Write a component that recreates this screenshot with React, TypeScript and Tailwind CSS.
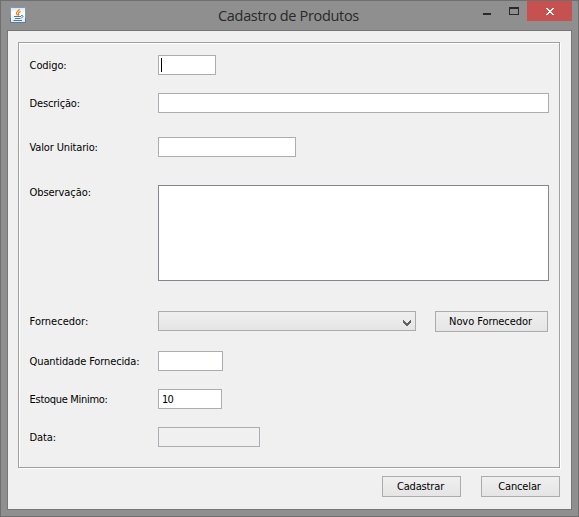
import type { ReactNode } from "react";

function Row({ label, spacing, gap, children }: { label: string; spacing: string; gap: string; children: ReactNode }) {
  return (
    <div className={`flex items-start ${gap}`}>
      <label className={`w-[129px] shrink-0 whitespace-nowrap pt-px pl-[0.6px] leading-[20px] ${spacing}`}>{label}</label>
      {children}
    </div>
  );
}

function Field({ size, children }: { size: string; children?: ReactNode }) {
  return <div className={`flex h-5 shrink-0 items-center border border-[#abadb3] bg-white px-[2px] ${size}`}>{children}</div>;
}

function Button({ size, children }: { size: string; children: ReactNode }) {
  return (
    <button
      className={`flex h-[21px] shrink-0 items-center justify-center whitespace-nowrap border border-[#acacac] bg-linear-to-b from-[#efefef] to-[#e5e5e5] pr-[2px] leading-none ${size}`}
    >
      {children}
    </button>
  );
}

function JavaIcon() {
  return (
    <svg width="16" height="16" viewBox="0 0 16 16" fill="none">
      <defs>
        <linearGradient id="tile" x1="0" y1="0" x2="0" y2="1">
          <stop offset="0" stopColor="#d9e3ea" />
          <stop offset="0.35" stopColor="#ffffff" />
          <stop offset="1" stopColor="#dfe7ec" />
        </linearGradient>
      </defs>
      <rect x="0.5" y="0.5" width="15" height="15" rx="0.8" fill="url(#tile)" stroke="#7d9bb0" />
      <path d="M0.5 11v4.5h15V11" stroke="#547e9c" />
      <path d="M9.3 2C9.5 4 6 4.6 6.4 6.3c.2.8.9 1.1 1.1 2M10.6 4.7C9 5.2 8 6 8.6 6.9c.5.7.2 1.1-.4 1.6" stroke="#ea8424" strokeWidth="1.3" />
      <path d="M4 9.5h7M5 11.5h5.5M3.5 13.5h8.5" stroke="#527b9b" strokeWidth="1.1" />
      <path d="M11 8.6c2.4-.8 3 1.5.2 2.4" stroke="#527b9b" />
    </svg>
  );
}

export default function App() {
  return (
    <div className="flex h-[517px] w-[579px] flex-col border border-[#6f6f6f] bg-[#8f8f8f] px-[6px] pb-[6px] font-['DejaVu_Sans_Condensed','DejaVu_Sans',sans-serif] text-[11px] text-black">
      <header className="grid h-[29px] shrink-0 grid-cols-[143px_1fr_143px] items-start">
        <div className="pt-[6px] pl-[3px]"><JavaIcon /></div>
        <h1 className="pt-[5px] pr-[2px] text-center font-['Open_Sans',sans-serif] text-[14.5px] leading-[20px] tracking-[-0.32px] whitespace-nowrap text-[#292929]">
          Cadastro de Produtos
        </h1>
        <div className="flex justify-end">
          <div className="mt-[12px] mr-[18px] h-[2px] w-2 bg-[#292929]" />
          <div className="mt-[6px] mr-2 h-2 w-[10px] border border-t-2 border-[#292929]" />
          <div className="flex h-5 w-[45px] shrink-0 items-center justify-center bg-[#c75050] pt-px pl-px">
            <svg width="8" height="7" viewBox="0 0 8 7" fill="#fff" shapeRendering="crispEdges">
              <path d="M0 0h2v1h1v1h2V1h1V0h2v1H7v1H6v1H5v1h1v1h1v1h1v1H6V6H5V5H3v1H2v1H0V6h1V5h1V4h1V3H2V2H1V1H0z" />
            </svg>
          </div>
        </div>
      </header>
      <main className="flex h-[480px] w-[565px] shrink-0 flex-col border border-[#767676] bg-[#f0f0f0] pt-[11px] pl-[10px]">
        <section className="h-[426px] w-[542px] shrink-0 border border-[#a0a0a0] pt-3 pl-[10px] shadow-[1px_1px_0_#fff,inset_1px_1px_0_#fff]">
          <Row label="Codigo:" spacing="tracking-[-0.1px]" gap="h-5">
            <Field size="w-[58px]"><span className="h-[14px] w-px bg-black" /></Field>
          </Row>
          <Row label="Descrição:" spacing="tracking-[-0.18px]" gap="mt-[18px] h-5">
            <Field size="w-[391px]" />
          </Row>
          <Row label="Valor Unitario:" spacing="tracking-[-0.15px]" gap="mt-6 h-5">
            <Field size="w-[138px]" />
          </Row>
          <Row label="Observação:" spacing="tracking-[-0.08px] -mt-[3px]" gap="mt-[28px]">
            <div className="h-24 w-[391px] border border-[#828790] bg-white" />
          </Row>
          <Row label="Fornecedor:" spacing="tracking-[0px]" gap="mt-[30px] h-5">
            <div className="flex h-5 w-[258px] shrink-0 items-center justify-end border border-[#acacac] bg-linear-to-b from-[#efefef] to-[#e5e5e5] pr-[4px]">
              <svg className="mt-[4px]" width="8" height="6" viewBox="0 0 8 6" fill="#606060" shapeRendering="crispEdges">
                <path d="M0 0h1v1h1v1h1v1h2V2h1V1h1V0h1v3H7v1H6v1H5v1H3V5H2V4H1V3H0z" />
              </svg>
            </div>
            <div className="ml-[19px]"><Button size="w-[113px] tracking-[-0.08px]">Novo Fornecedor</Button></div>
          </Row>
          <Row label="Quantidade Fornecida:" spacing="tracking-[-0.12px]" gap="mt-5 h-5">
            <Field size="w-[65px]" />
          </Row>
          <Row label="Estoque Minimo:" spacing="tracking-[-0.3px]" gap="mt-[18px] h-5">
            <Field size="w-[64px]"><span className="pt-[2px] pl-px tracking-[-0.9px]">10</span></Field>
          </Row>
          <Row label="Data:" spacing="tracking-[-0.1px]" gap="mt-[18px] h-5">
            <div className="h-5 w-[102px] border border-[#abadb3]" />
          </Row>
        </section>
        <footer className="mt-2 mr-[11px] flex justify-end gap-5">
          <Button size="w-[79px] tracking-[-0.15px]">Cadastrar</Button>
          <Button size="w-[79px] tracking-[-0.15px]">Cancelar</Button>
        </footer>
      </main>
    </div>
  );
}
